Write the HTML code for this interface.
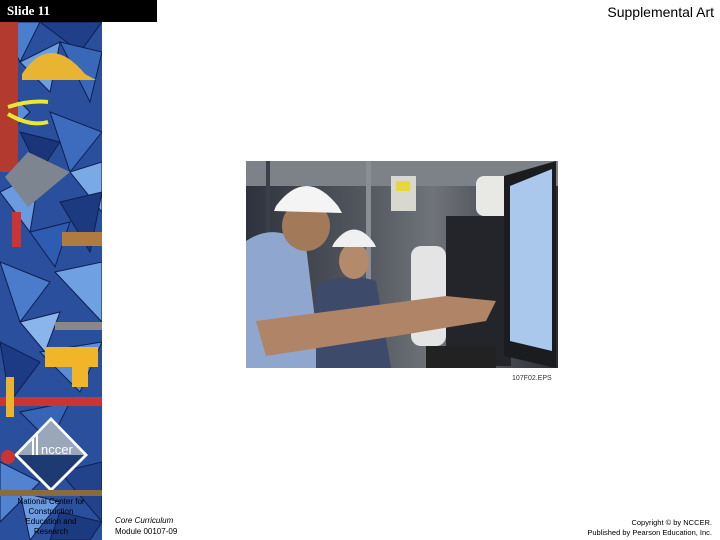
<!DOCTYPE html>
<html><head><meta charset="utf-8"><style>
html,body{margin:0;padding:0;width:720px;height:540px;overflow:hidden;background:#fff;font-family:"Liberation Sans",sans-serif;position:relative}
.a{position:absolute}
</style></head><body>
<svg class="a" style="left:0;top:22px" width="102" height="518" viewBox="0 0 102 518">
<rect width="102" height="518" fill="#2a4f9c"/>
<g stroke="#0f1f4f" stroke-width="1">
<polygon points="0,0 40,0 20,40" fill="#4a7fd0"/><polygon points="40,0 102,0 80,30" fill="#1f3f8a"/>
<polygon points="20,40 60,20 50,70" fill="#6d9ee0"/><polygon points="60,20 102,30 90,80" fill="#3a68b8"/>
<polygon points="0,60 30,90 0,120" fill="#5a8ed8"/><polygon points="50,90 102,110 70,150" fill="#3d6bbd"/>
<polygon points="20,110 60,120 40,150" fill="#1a357a"/><polygon points="70,150 102,140 102,190" fill="#7aaae6"/>
<polygon points="0,170 40,150 30,210" fill="#6a9be0"/><polygon points="60,180 102,170 90,230" fill="#1c3a80"/>
<polygon points="30,210 70,200 55,245" fill="#2d5cb0"/>
<polygon points="0,240 50,260 20,300" fill="#4b7ccb"/><polygon points="55,250 102,240 102,300" fill="#6ea0e2"/>
<polygon points="20,300 60,290 45,330" fill="#8ab4ec"/>
<polygon points="0,320 40,340 10,380" fill="#1d3a85"/><polygon points="40,330 102,320 80,370" fill="#5a8dd8"/>
<polygon points="20,390 70,380 50,420" fill="#3864b5"/><polygon points="0,440 40,460 0,500" fill="#5283d0"/>
<polygon points="60,450 102,440 102,500" fill="#22428c"/><polygon points="20,470 60,480 30,518" fill="#6a9be0"/>
<polygon points="60,490 102,500 90,518 50,518" fill="#1c3a80"/>
</g>
<rect x="0" y="0" width="18" height="150" fill="#b33a2e"/>
<path d="M22,52 Q50,10 85,52 L96,58 L22,58Z" fill="#e8b431"/>
<path d="M8,85 Q30,78 48,80 M8,92 Q30,105 48,100" stroke="#e8e832" stroke-width="4" fill="none"/>
<path d="M5,155 L28,130 L70,150 L28,185 Z" fill="#7d8590"/>
<rect x="12" y="190" width="9" height="35" fill="#c33"/>
<rect x="62" y="210" width="40" height="14" fill="#b07a40"/>
<rect x="55" y="300" width="47" height="8" fill="#888"/>
<path d="M45,325 L98,325 L98,345 L88,345 L88,365 L72,365 L72,345 L45,345Z" fill="#f1b52a"/>
<rect x="0" y="375" width="102" height="9" fill="#c33"/>
<rect x="6" y="355" width="8" height="40" fill="#e8b431"/>
<polygon points="51,395 88,433 51,470 14,433" fill="#fff"/>
<polygon points="51,399 84,433 51,466 18,433" fill="#1d3a72"/>
<polygon points="18,433 84,433 51,399" fill="#9aa7bb"/>
<rect x="32" y="416" width="2" height="17" fill="#fff"/><rect x="36" y="410" width="2" height="23" fill="#fff"/>
<text x="41" y="432" font-family="Liberation Sans" font-size="13" fill="#fff">nccer</text>
<circle cx="8" cy="435" r="7" fill="#c33"/>
<rect x="0" y="468" width="102" height="6" fill="#8a6a40"/>
</svg>
<div class="a" style="left:12px;top:497px;width:78px;text-align:center;font-size:8px;line-height:10px;color:#000">National Center for Construction Education and Research</div>
<div class="a" style="left:0;top:0;width:157px;height:22px;background:#000"></div>
<div class="a" style="left:7px;top:3px;color:#fff;font-family:'Liberation Serif',serif;font-weight:bold;font-size:13px">Slide 11</div>
<div class="a" style="right:6px;top:4px;font-size:14px;color:#000">Supplemental Art</div>
<div class="a" style="left:246px;top:161px;width:312px;height:207px;overflow:hidden;background:linear-gradient(90deg,#2d323c,#555a62 40%,#70747a 60%,#2a2d34)">
<svg width="312" height="207" viewBox="0 0 312 207">
<rect x="0" y="0" width="312" height="25" fill="#7d8288"/>
<rect x="20" y="0" width="4" height="207" fill="#3a3f4a"/><rect x="120" y="0" width="5" height="207" fill="#8a8e94"/>
<rect x="145" y="15" width="25" height="35" fill="#d8d8d0"/><rect x="150" y="20" width="14" height="10" fill="#e6d83a"/>
<rect x="230" y="15" width="40" height="40" fill="#e8e8e4" rx="8"/>
<rect x="165" y="85" width="35" height="100" fill="#e4e4e4" rx="10"/>
<rect x="200" y="55" width="65" height="150" fill="#23252a"/>
<polygon points="258,15 310,0 310,207 258,195" fill="#1a1c20"/>
<polygon points="264,25 306,8 306,190 264,180" fill="#a9c8ec"/>
<rect x="180" y="185" width="70" height="22" fill="#222"/>
<path d="M0,80 Q30,60 60,85 L75,207 L0,207Z" fill="#8fa6cf"/>
<path d="M70,125 Q100,110 130,120 L145,207 L70,207Z" fill="#3e4a6a"/>
<ellipse cx="60" cy="65" rx="24" ry="25" fill="#a27a5a"/>
<path d="M30,45 Q60,5 92,45 L96,52 L28,50Z" fill="#f4f4f4"/>
<ellipse cx="108" cy="100" rx="15" ry="18" fill="#b38a6c"/>
<path d="M88,82 Q108,55 128,82 L130,86 L86,86Z" fill="#f0f0f0"/>
<path d="M10,160 L200,135 L250,140 L240,160 L150,175 L20,195Z" fill="#b08466"/>
</svg></div>
<div class="a" style="left:512px;top:375px;font-size:7px;color:#333">107F02.EPS</div>
<div class="a" style="left:115px;top:515px;font-size:8px;line-height:11px;color:#000;font-style:italic">Core Curriculum</div>
<div class="a" style="left:115px;top:526px;font-size:8px;line-height:11px;color:#000">Module 00107-09</div>
<div class="a" style="right:8px;top:518px;font-size:7.5px;line-height:10px;color:#000;text-align:right">Copyright © by NCCER.<br>Published by Pearson Education, Inc.</div>
</body></html>
